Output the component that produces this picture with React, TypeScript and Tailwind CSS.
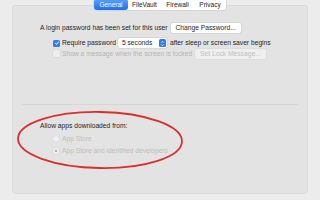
export default function App() {
  const font = { fontFamily: '"Liberation Sans", Arial, sans-serif' };
  return (
    <div className="relative w-[320px] h-[200px] overflow-hidden bg-[#ececec]" style={font}>
      {/* panel */}
      <div className="absolute left-[12px] top-[5px] w-[296px] h-[189px] rounded-[3px] border border-[#dadada] bg-[#e3e3e3]" />

      <div className="relative flex flex-col">
        {/* tabs */}
        <div className="flex justify-center h-[10px] -mt-[1px]">
          <div className="flex h-[11px] rounded-[3px] bg-white shadow-[0_0_0_0.5px_#c8c8c8] text-[6.5px] leading-[11px] text-[#222]">
            <div className="w-[34px] text-center rounded-[3px] bg-gradient-to-b from-[#5aa0f8] to-[#1b6ff2] text-white">General</div>
            <div className="w-[33px] text-center">FileVault</div>
            <div className="w-[33px] text-center">Firewall</div>
            <div className="w-[32px] text-center">Privacy</div>
          </div>
        </div>

        {/* password rows */}
        <div className="flex items-center mt-[14px] ml-[40px] gap-[3px] text-[6.7px] text-[#1e1e1e]">
          <span>A login password has been set for this user</span>
          <div className="h-[10px] px-[5px] leading-[10px] rounded-[2px] bg-white shadow-[0_0_0_0.5px_#c9c9c9]">Change Password...</div>
        </div>

        <div className="flex items-center mt-[5px] ml-[53px] text-[6.7px] text-[#1e1e1e]">
          <div className="w-[7px] h-[7px] rounded-[1.5px] bg-[#2f7cf2] flex items-center justify-center">
            <svg width="6" height="6" viewBox="0 0 6 6">
              <path d="M1.2 3.1 L2.5 4.4 L4.8 1.5" fill="none" stroke="white" strokeWidth="1" />
            </svg>
          </div>
          <span className="ml-[2px]">Require password</span>
          <div className="ml-[2px] flex items-center h-[10px] w-[49px] rounded-[2px] bg-white shadow-[0_0_0_0.5px_#c9c9c9]">
            <span className="flex-1 pl-[4px] leading-[10px]">5 seconds</span>
            <div className="w-[7px] h-[8px] mr-[0.5px] rounded-[1.5px] bg-[#2f7cf2] flex flex-col items-center justify-center gap-[1px]">
              <svg width="5" height="2" viewBox="0 0 5 2"><path d="M1 1.8 L2.5 0.3 L4 1.8" fill="none" stroke="white" strokeWidth="0.7" /></svg>
              <svg width="5" height="2" viewBox="0 0 5 2"><path d="M1 0.2 L2.5 1.7 L4 0.2" fill="none" stroke="white" strokeWidth="0.7" /></svg>
            </div>
          </div>
          <span className="ml-[3px]">after sleep or screen saver begins</span>
        </div>

        <div className="flex items-center mt-[0.5px] ml-[53px] text-[6.7px] text-[#b4b4b4]">
          <div className="w-[7px] h-[7px] rounded-[1.5px] bg-[#ededed] shadow-[0_0_0_0.5px_#d2d2d2]" />
          <span className="ml-[2px]">Show a message when the screen is locked</span>
          <div className="ml-[3px] h-[10px] px-[5px] leading-[10px] rounded-[2px] bg-[#efefef] shadow-[0_0_0_0.5px_#d6d6d6] text-[#c2c2c2]">Set Lock Message...</div>
        </div>

        {/* separator */}
        <div className="mt-[45px] mx-[22px] h-px bg-[#d6d6d6]" />

        {/* gatekeeper */}
        <div className="mt-[16px] ml-[40px] text-[6.7px] text-[#1e1e1e]">Allow apps downloaded from:</div>
        <div className="flex items-center mt-[3px] ml-[53px] text-[6.7px] text-[#bdbdbd]">
          <div className="w-[6px] h-[6px] rounded-full bg-[#efefef] shadow-[0_0_0_0.5px_#d6d6d6]" />
          <span className="ml-[3px]">App Store</span>
        </div>
        <div className="flex items-center mt-[2px] ml-[53px] text-[6.7px] text-[#bdbdbd]">
          <div className="w-[6px] h-[6px] rounded-full bg-[#efefef] shadow-[0_0_0_0.5px_#d6d6d6] flex items-center justify-center">
            <div className="w-[2px] h-[2px] rounded-full bg-[#9a9a9a]" />
          </div>
          <span className="ml-[3px]">App Store and identified developers</span>
        </div>
      </div>

      {/* red annotation */}
      <svg className="absolute left-0 top-0" width="320" height="200" viewBox="0 0 320 200">
        <ellipse cx="100" cy="140" rx="82" ry="28" fill="none" stroke="#d8302b" strokeWidth="1.8" transform="rotate(1 100 140)" />
      </svg>
    </div>
  );
}
